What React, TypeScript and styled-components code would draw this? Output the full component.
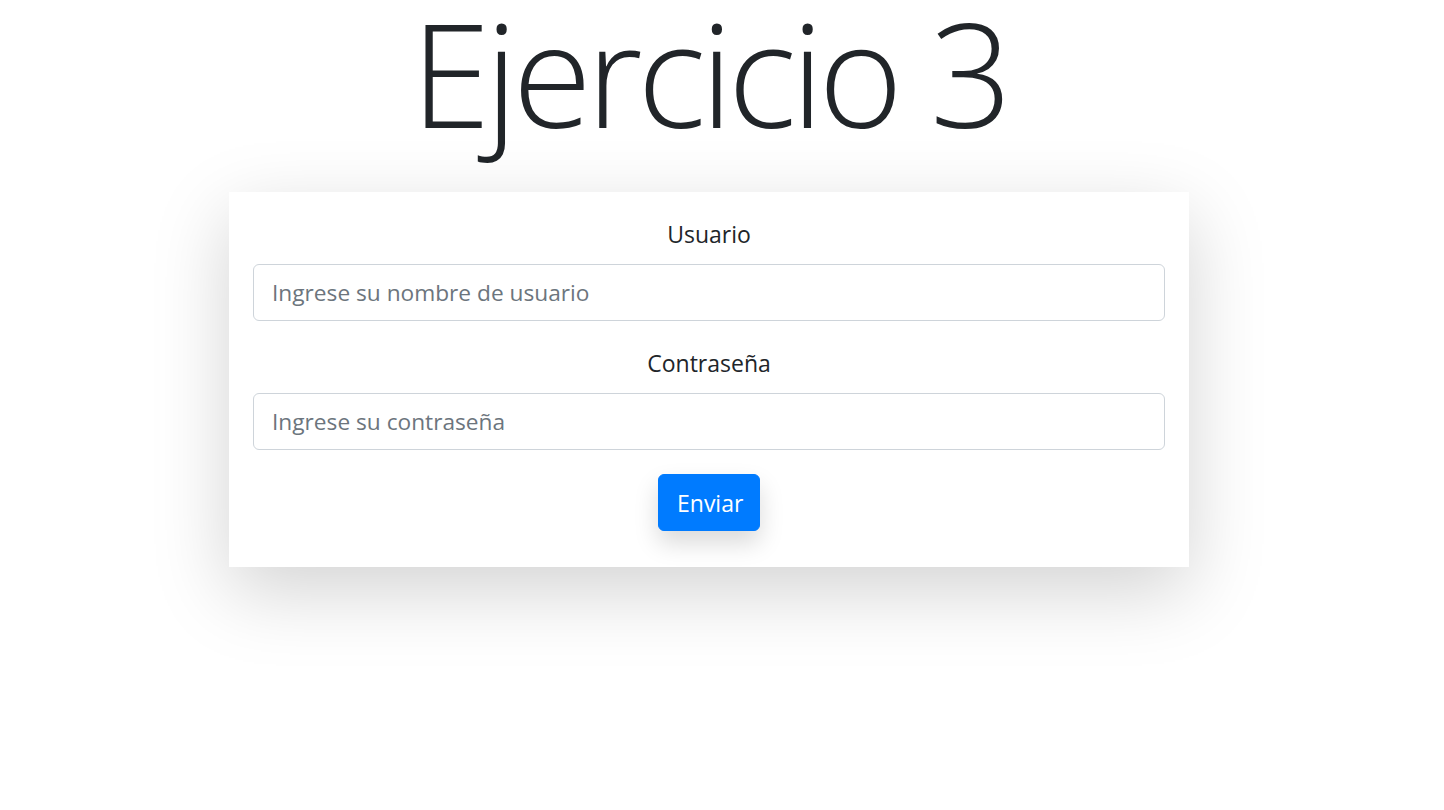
import { createGlobalStyle, styled } from "styled-components";

const GlobalStyle = createGlobalStyle`
  * {
    box-sizing: border-box;
  }
  body {
    margin: 0;
    background-color: #fff;
    color: #212529;
    font-family: "Open Sans", "Noto Sans", sans-serif;
    font-size: 24px;
    line-height: 1.5;
  }
`;

const Page = styled.div`
  display: flex;
  flex-direction: column;
  align-items: center;
  padding-right: 26px;
  min-height: 810px;
`;

const Title = styled.h1`
  font-size: 144px;
  font-weight: 300;
  line-height: 144px;
  letter-spacing: -5.2px;
  margin: 0 0 48px;
  color: #212529;
`;

const Card = styled.form`
  background-color: #fff;
  box-shadow: 0 24px 72px rgba(0, 0, 0, 0.175);
  padding: 24px 24px 36px;
  width: 960px;
  display: flex;
  flex-direction: column;
  align-items: center;
`;

const Group = styled.div`
  display: flex;
  flex-direction: column;
  align-items: center;
  margin-bottom: 24px;
  width: 100%;
`;

const Label = styled.label`
  display: block;
  margin-bottom: 12px;
  line-height: 36px;
  font-size: 23px;
`;

const Input = styled.input`
  display: block;
  width: 100%;
  height: 57px;
  padding: 9px 18px;
  font-family: inherit;
  font-size: 22.7px;
  line-height: 36px;
  color: #495057;
  background-color: #fff;
  border: 1px solid #ced4da;
  border-radius: 6px;
  outline: none;

  &::placeholder {
    color: #6c757d;
  }
`;

const Button = styled.button`
  background-color: #007bff;
  border: 1px solid #007bff;
  border-radius: 6px;
  color: #fff;
  cursor: pointer;
  font-family: inherit;
  font-size: 23px;
  line-height: 36px;
  padding: 9px 18px;
  height: 57px;
  width: 102px;
  box-shadow: 0 12px 24px rgba(0, 0, 0, 0.15);
`;

export default function App() {
  return (
    <>
      <GlobalStyle />
      <Page>
        <Title>Ejercicio 3</Title>
        <Card onSubmit={(e) => e.preventDefault()}>
          <Group>
            <Label htmlFor="usuario">Usuario</Label>
            <Input id="usuario" type="text" placeholder="Ingrese su nombre de usuario" />
          </Group>
          <Group>
            <Label htmlFor="password">Contraseña</Label>
            <Input id="password" type="password" placeholder="Ingrese su contraseña" />
          </Group>
          <Button type="submit">Enviar</Button>
        </Card>
      </Page>
    </>
  );
}
